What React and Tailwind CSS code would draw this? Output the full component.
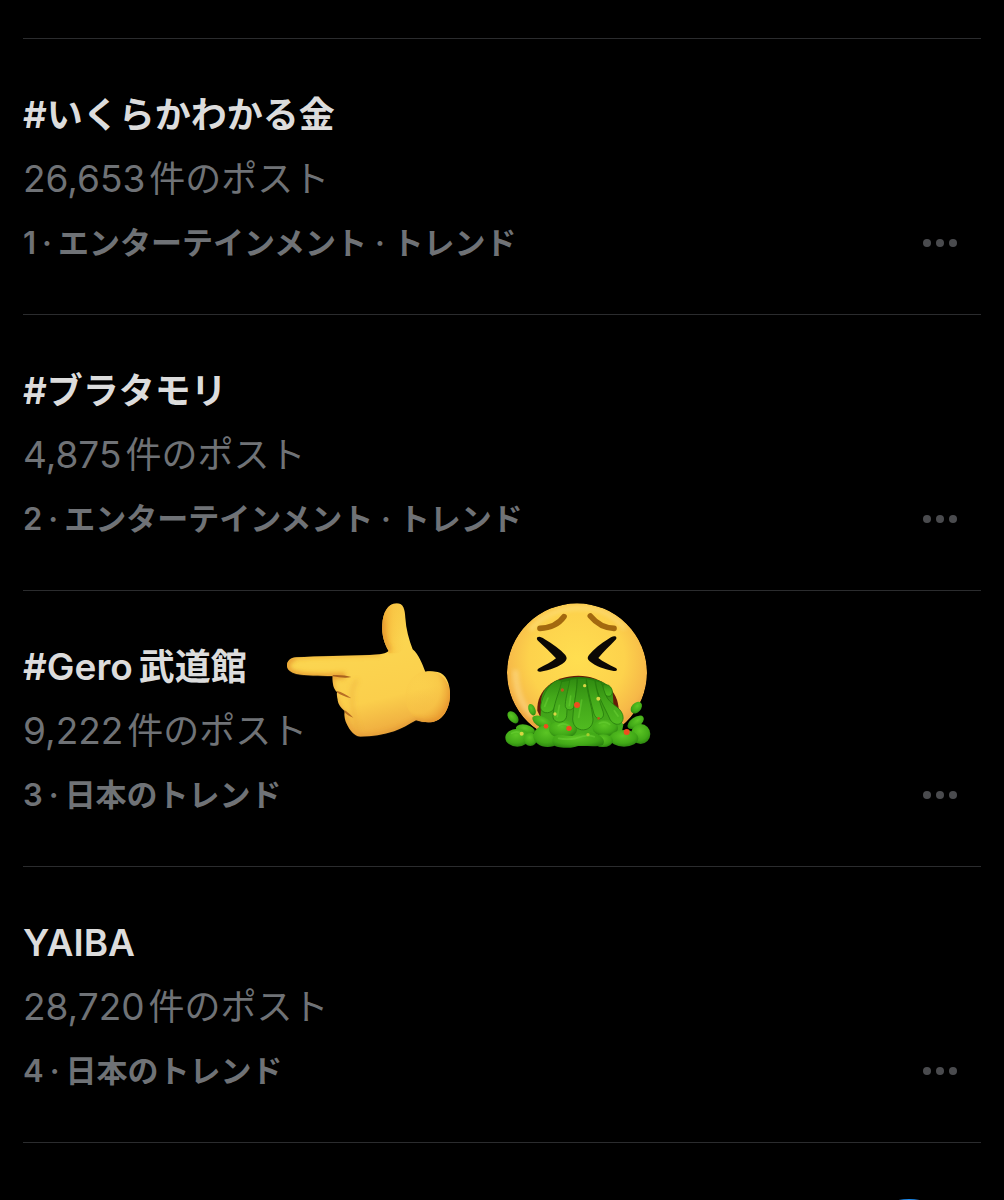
import { useState } from "react";

const trends = [
    { latin: "#", name: "いくらかわかる金", count: "26,653", category: "エンターテインメント · トレンド" },
    { latin: "#", name: "ブラタモリ", count: "4,875", category: "エンターテインメント · トレンド" },
    { latin: "#Gero", name: "武道館", count: "9,222", category: "日本のトレンド", stickers: true },
    { latin: "YAIBA", name: "", count: "28,720", category: "日本のトレンド" },
];

function PointingHand() {
    return (
        <svg viewBox="0 3 600 507" className="h-[169px] w-[200px]" aria-hidden="true">
            <defs>
                <linearGradient id="skin" x1="0" y1="0" x2="0.3" y2="1">
                    <stop offset="0" stopColor="#f6bc3c" />
                    <stop offset="0.45" stopColor="#fbd550" />
                    <stop offset="0.8" stopColor="#fbcf4c" />
                    <stop offset="1" stopColor="#f0b041" />
                </linearGradient>
                <linearGradient id="thumb" x1="0" y1="0" x2="1" y2="0">
                    <stop offset="0" stopColor="#ee9f2e" />
                    <stop offset="0.5" stopColor="#f9c544" stopOpacity="0.6" />
                    <stop offset="1" stopColor="#fbd350" stopOpacity="0" />
                </linearGradient>
                <radialGradient id="wrist" cx="0.3" cy="0.35" r="0.7">
                    <stop offset="0" stopColor="#fbd24f" stopOpacity="0" />
                    <stop offset="0.65" stopColor="#f8c546" stopOpacity="0.6" />
                    <stop offset="1" stopColor="#e99b31" />
                </radialGradient>
                <filter id="soft" x="-20%" y="-60%" width="140%" height="220%">
                    <feGaussianBlur stdDeviation="6" />
                </filter>
                <clipPath id="handShape">
                    <path d="M79 202 C140 198 240 197 300 195 C330 194 350 190 356 183 C343 161 335 135 337 104 C338 70 353 40 380 40 C400 40 405 58 406 84 C408 118 417 149 428 178 C446 193 457 222 466 245 C479 243 491 244 503 246 C528 252 541 280 540 316 C539 356 519 391 488 396 C470 399 453 395 438 391 C416 403 394 417 372 424 C340 434 306 440 271 440 C252 438 240 421 232 405 C225 393 222 379 224 363 C209 350 203 338 203 328 C201 319 200 314 201 306 C190 296 187 280 188 258 C150 257 105 257 80 252 C61 247 51 239 51 226 C51 213 62 203 79 202 Z" />
                </clipPath>
            </defs>
            <g clipPath="url(#handShape)">
                <rect x="40" y="30" width="520" height="420" fill="url(#skin)" />
                <path d="M330 30 H410 V170 L385 190 H356 L330 130 Z" fill="url(#thumb)" />
                <ellipse cx="474" cy="320" rx="68" ry="78" fill="url(#wrist)" />
                <g fill="none" filter="url(#soft)">
                    <path d="M225 256 C150 262 90 262 62 246 C45 235 48 208 75 203" stroke="#e5942c" strokeWidth="18" opacity="0.8" />
                    <path d="M75 201 C150 196 230 194 330 192" stroke="#eb9f2d" strokeWidth="10" opacity="0.8" />
                    <path d="M188 265 C184 300 200 345 225 378 C233 410 248 438 276 438" stroke="#e89a36" strokeWidth="14" opacity="0.6" />
                    <path d="M265 442 C330 438 390 420 438 391 C460 398 480 398 495 394" stroke="#d9892f" strokeWidth="10" opacity="0.7" />
                    <path d="M262 270 C240 290 238 350 268 430" stroke="#e9a238" strokeWidth="12" opacity="0.35" />
                    <path d="M338 90 C336 130 344 160 360 182" stroke="#dd8b28" strokeWidth="10" opacity="0.7" />
                </g>
                <path d="M188 255 C210 254 230 256 244 261 C228 265 208 262 188 259 Z" fill="#a8621e" />
                <path d="M201 303 C216 306 228 314 244 325 C226 321 213 315 200 307 Z" fill="#b86e24" />
                <path d="M223 360 C232 365 240 373 250 383 C237 379 230 373 223 366 Z" fill="#b86e24" />
            </g>
        </svg>
    );
}

function VomitingFace() {
    return (
        <svg viewBox="0 3 540 507" className="h-[169px] w-[180px]" aria-hidden="true">
            <defs>
                <radialGradient id="face" cx="0.5" cy="0.4" r="0.62">
                    <stop offset="0" stopColor="#ffde50" />
                    <stop offset="0.55" stopColor="#fdd24c" />
                    <stop offset="0.82" stopColor="#f6b848" />
                    <stop offset="1" stopColor="#e5963c" />
                </radialGradient>
                <linearGradient id="slime" x1="0" y1="0" x2="0" y2="1">
                    <stop offset="0" stopColor="#237a0d" />
                    <stop offset="0.4" stopColor="#3f9d18" />
                    <stop offset="1" stopColor="#48b41c" />
                </linearGradient>
                <radialGradient id="blob" cx="0.45" cy="0.35" r="0.75">
                    <stop offset="0" stopColor="#5bc524" />
                    <stop offset="0.6" stopColor="#41a917" />
                    <stop offset="1" stopColor="#23750c" />
                </radialGradient>
                <linearGradient id="drip" x1="0" y1="0" x2="0" y2="1">
                    <stop offset="0" stopColor="#2f8a10" />
                    <stop offset="0.5" stopColor="#43a81a" />
                    <stop offset="1" stopColor="#50bb20" />
                </linearGradient>
                <filter id="glow" x="-20%" y="-20%" width="140%" height="140%">
                    <feGaussianBlur stdDeviation="7" />
                </filter>
                <clipPath id="faceShape">
                    <ellipse cx="261" cy="248" rx="210" ry="208" />
                </clipPath>
            </defs>
            <g clipPath="url(#faceShape)">
                <ellipse cx="261" cy="248" rx="210" ry="208" fill="url(#face)" />
                <path d="M120 120 C165 68 225 54 270 54 C330 54 375 78 405 116" fill="none" stroke="#fff0a0" strokeWidth="14" opacity="0.4" filter="url(#glow)" />
                <path d="M76 240 C78 310 98 350 128 378" fill="none" stroke="#ffe3a0" strokeWidth="18" opacity="0.45" filter="url(#glow)" />
            </g>

            {/* Brows */}
            <g fill="none" stroke="#a3690f" strokeWidth="17" strokeLinecap="round">
                <path d="M150 115 C181 114 207 101 222 80" />
                <path d="M301 78 C320 101 344 114 372 115" />
            </g>

            {/* Eyes */}
            <g fill="#0b0805">
                <path d="M142 142 C148 138 155 142 163 147 C188 162 211 178 226 195 C232 203 231 209 224 216 C208 230 179 241 151 245 C141 246 140 239 147 235 C166 225 184 216 198 205 C181 186 162 169 144 152 C140 148 140 145 142 142 Z" />
                <path d="M378 140 C371 136 364 141 356 146 C332 160 311 178 297 195 C291 202 292 208 299 214 C317 229 345 239 371 243 C382 244 384 237 376 233 C357 224 339 215 325 204 C341 184 359 168 376 150 C380 146 380 143 378 140 Z" />
            </g>

            {/* Mouth */}
            <path d="M142 362 C139 300 193 257 265 257 C336 257 386 303 386 360 L366 390 L155 390 Z" fill="#651b08" />
            <path d="M153 350 C152 322 158 304 170 293 C212 250 322 250 362 293 C370 304 369 325 371 350 L400 405 L390 452 H140 L151 385 Z" fill="url(#slime)" />

            {/* Splashes beside the mouth */}
            <g fill="url(#blob)">
                <ellipse cx="69" cy="382" rx="13" ry="21" transform="rotate(-40 69 382)" />
                <ellipse cx="126" cy="359" rx="10" ry="18" transform="rotate(-22 126 359)" />
                <ellipse cx="439" cy="353" rx="14" ry="20" transform="rotate(42 439 353)" />
                <ellipse cx="437" cy="397" rx="15" ry="28" transform="rotate(55 437 397)" />
                <ellipse cx="106" cy="419" rx="29" ry="15" transform="rotate(12 106 419)" />
                <ellipse cx="82" cy="443" rx="36" ry="27" />
                <ellipse cx="121" cy="448" rx="20" ry="20" />
                <ellipse cx="452" cy="432" rx="29" ry="30" />
                <ellipse cx="158" cy="397" rx="34" ry="16" transform="rotate(26 158 397)" />
                <ellipse cx="173" cy="438" rx="43" ry="33" />
                <ellipse cx="219" cy="418" rx="42" ry="27" />
                <ellipse cx="346" cy="414" rx="38" ry="25" />
                <ellipse cx="402" cy="445" rx="43" ry="25" />
                <ellipse cx="339" cy="452" rx="30" ry="19" />
            </g>

            {/* Drips, back to front */}
            <g fill="url(#drip)" stroke="#257a0d" strokeOpacity="0.8" strokeWidth="3">
                <path d="M205 270 C169 280 152 335 152 352 C153 374 188 374 194 350 C201 324 218 300 220 276 Z" />
                <path d="M340 282 C336 304 345 319 357 319 C370 317 371 296 356 286 Z" />
                <path d="M316 272 C320 315 342 348 361 390 C378 414 406 402 398 374 C390 351 366 344 353 326 C342 310 340 288 332 276 Z" />
                <path d="M215 275 C206 313 190 342 189 380 C190 403 228 402 230 377 C230 345 240 309 241 270 Z" />
                <path d="M240 268 C234 302 224 333 226 350 C232 366 253 361 254 342 C256 317 262 289 261 265 Z" />
                <path d="M289 266 C294 305 304 342 312 372 C322 396 347 387 339 365 C328 333 320 301 314 271 Z" />
                <path d="M263 265 C261 306 249 351 248 387 C249 431 310 430 309 387 C307 350 290 310 288 265 Z" />
            </g>
            <g fill="none" stroke="#76dc3d" strokeLinecap="round" strokeWidth="5" opacity="0.4">
                <path d="M174 324 L164 349" />
                <path d="M208 346 L202 380" />
                <path d="M275 330 L266 382" />
                <path d="M242 318 L238 347" />
                <path d="M373 362 L384 378" />
                <path d="M328 400 Q345 392 359 403" />
                <path d="M205 407 Q217 396 237 407" />
                <path d="M65 430 Q81 420 98 432" />
            </g>
            <path d="M204 471 C188 470 181 449 194 438 C212 427 236 443 259 436 C278 428 293 424 312 430 C336 436 348 452 339 464 C324 474 277 465 257 470 C238 475 216 474 204 471 Z" fill="url(#blob)" />
            <path d="M206 445 Q232 450 258 445 Q290 432 313 440" fill="none" stroke="#79dd42" strokeWidth="5" strokeLinecap="round" opacity="0.4" />

            {/* Chunks */}
            <g fill="#ef4d1e">
                <circle cx="261" cy="345" r="9" />
                <circle cx="237" cy="415" r="8" />
                <circle cx="410" cy="426" r="9" />
                <circle cx="168" cy="409" r="7" />
                <circle cx="217" cy="300" r="5" fill="#b95a1a" />
                <circle cx="326" cy="385" r="4" fill="#b95a1a" />
            </g>
            <g fill="#d9d643">
                <circle cx="284" cy="287" r="5" />
                <circle cx="325" cy="326" r="6" />
                <circle cx="195" cy="372" r="5" />
                <circle cx="95" cy="431" r="6" />
                <circle cx="294" cy="434" r="5" fill="#a5cf2d" />
            </g>
        </svg>
    );
}

function MoreButton({ onClick }) {
    return (
        <button
            type="button"
            aria-label="もっと見る"
            onClick={onClick}
            className="flex h-16 shrink-0 cursor-pointer items-center gap-[5px] pr-6"
        >
            <span className="size-2 rounded-full bg-[#4a4b4e]" />
            <span className="size-2 rounded-full bg-[#4a4b4e]" />
            <span className="size-2 rounded-full bg-[#4a4b4e]" />
        </button>
    );
}

function TrendRow({ trend, rank, onHide }) {
    return (
        <li className="relative flex items-end justify-between border-b border-[#2b2c2e] pt-11 pb-[39px]">
            <div className="min-w-0 text-[36px] leading-[64px] text-[#6f7276]">
                <h2 className="font-semibold text-[#dcdcdc]">
                    <span className="text-[37px]">{trend.latin}</span>
                    {trend.name && <span className={trend.latin.length > 1 ? "ml-1.5" : ""}>{trend.name}</span>}
                </h2>
                <p>
                    <span className="mr-1 text-[37px]">{trend.count}</span>
                    件のポスト
                </p>
                <p className="text-[31px] leading-[64px] font-semibold">
                    {rank}
                    <span className="mx-1.5">·</span>
                    {trend.category}
                </p>
            </div>
            <MoreButton onClick={onHide} />

            {trend.stickers && (
                <div className="pointer-events-none absolute top-0 left-[247px] flex gap-5">
                    <PointingHand />
                    <VomitingFace />
                </div>
            )}
        </li>
    );
}

export default function App() {
    const [hidden, setHidden] = useState([]);

    return (
        <main
            lang="ja"
            className="relative min-h-screen overflow-hidden bg-black px-[23px] pt-[38px] font-['Inter','Noto_Sans_CJK_JP',sans-serif]"
        >
            <ul className="border-t border-[#2b2c2e]">
                {trends.map((trend, i) =>
                    hidden.includes(i) ? null : (
                        <TrendRow
                            key={trend.count}
                            trend={trend}
                            rank={i + 1}
                            onHide={() => setHidden((prev) => [...prev, i])}
                        />
                    )
                )}
            </ul>

            {/* Compose button, just peeking in */}
            <button
                type="button"
                aria-label="ポストする"
                className="absolute right-[39px] -bottom-[111px] size-28 rounded-full bg-[#1d8cf0]"
            />
        </main>
    );
}
